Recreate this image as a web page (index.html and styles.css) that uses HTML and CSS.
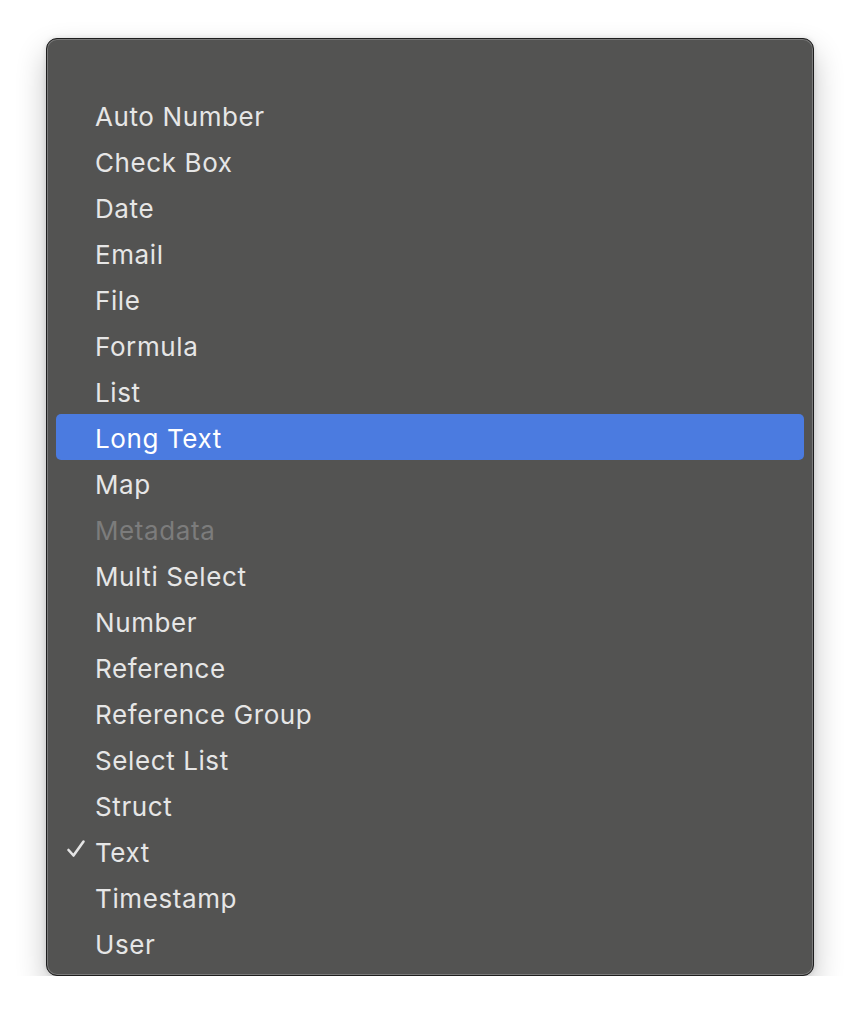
FILE: index.html
```html
<!DOCTYPE html>
<html>
<head>
<meta charset="utf-8">
<link rel="stylesheet" href="styles.css">
</head>
<body>
<div class="menu">
  <ul class="list">
    <li class="item">Auto Number</li>
    <li class="item">Check Box</li>
    <li class="item">Date</li>
    <li class="item">Email</li>
    <li class="item">File</li>
    <li class="item">Formula</li>
    <li class="item">List</li>
    <li class="item active">Long Text</li>
    <li class="item">Map</li>
    <li class="item disabled">Metadata</li>
    <li class="item">Multi Select</li>
    <li class="item">Number</li>
    <li class="item">Reference</li>
    <li class="item">Reference Group</li>
    <li class="item">Select List</li>
    <li class="item">Struct</li>
    <li class="item checked"><svg class="check" width="20" height="20" viewBox="0 0 20 20"><path d="M2.5 11 L7.5 16.5 L17.5 2.5" fill="none" stroke="#e4e4e4" stroke-width="2.6" stroke-linecap="round" stroke-linejoin="round"/></svg>Text</li>
    <li class="item">Timestamp</li>
    <li class="item">User</li>
  </ul>
</div>
</body>
</html>
```
FILE: styles.css
```css
html, body {
  margin: 0;
  padding: 0;
  background: #ffffff;
}
body {
  padding: 38px 46px 0 46px;
  font-family: Inter, "Noto Sans", "Liberation Sans", sans-serif;
}
.menu {
  width: 768px;
  height: 938px;
  box-sizing: border-box;
  background: #535352;
  border: 1px solid #1e1e1e;
  border-radius: 11px;
  box-shadow: inset 0 0 0 1px #7a7a7a, 0 14px 30px rgba(0,0,0,0.24), 0 0 5px rgba(0,0,0,0.12);
  padding: 53px 9px 10px 9px;
}
.list {
  list-style: none;
  margin: 0;
  padding: 0;
  display: flex;
  flex-direction: column;
}
.item {
  position: relative;
  height: 46px;
  box-sizing: border-box;
  padding-top: 2px;
  line-height: 45px;
  padding-left: 39px;
  font-size: 26px;
  color: #e6e6e6;
  border-radius: 5px;
  letter-spacing: 0.6px;
}
.item.active {
  background: #4b7be0;
  color: #ffffff;
}
.item.disabled {
  color: #7c7c7c;
}
.check {
  position: absolute;
  left: 10px;
  top: 11px;
}
```
